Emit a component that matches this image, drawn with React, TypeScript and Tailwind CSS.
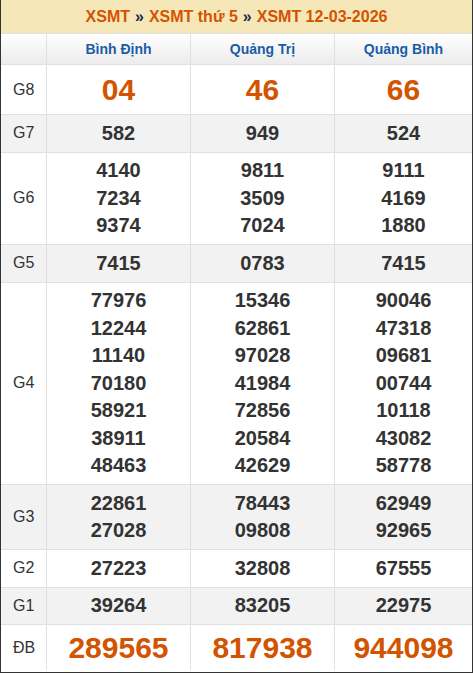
import React from "react";

const provinces = ["Bình Định", "Quảng Trị", "Quảng Bình"];

type Row = { label: string; values: string[][]; big?: boolean };

const rows: Row[] = [
    { label: "G8", values: [["04"], ["46"], ["66"]], big: true },
    { label: "G7", values: [["582"], ["949"], ["524"]] },
    {
        label: "G6",
        values: [
            ["4140", "7234", "9374"],
            ["9811", "3509", "7024"],
            ["9111", "4169", "1880"],
        ],
    },
    { label: "G5", values: [["7415"], ["0783"], ["7415"]] },
    {
        label: "G4",
        values: [
            ["77976", "12244", "11140", "70180", "58921", "38911", "48463"],
            ["15346", "62861", "97028", "41984", "72856", "20584", "42629"],
            ["90046", "47318", "09681", "00744", "10118", "43082", "58778"],
        ],
    },
    {
        label: "G3",
        values: [
            ["22861", "27028"],
            ["78443", "09808"],
            ["62949", "92965"],
        ],
    },
    { label: "G2", values: [["27223"], ["32808"], ["67555"]] },
    { label: "G1", values: [["39264"], ["83205"], ["22975"]] },
    { label: "ĐB", values: [["289565"], ["817938"], ["944098"]], big: true },
];

export default function App() {
    return (
        <div className="w-[473px] h-[673px] bg-white font-['Liberation_Sans'] border-b border-l border-r border-[#333]">
            <div className="h-[34px] flex items-center justify-center bg-[#f6e7b9] border-b border-[#e0e0e0] text-[16px] font-bold text-[#d35400]">
                <span>XSMT</span>
                <span className="mx-[5px] text-[#1a2a4a]">»</span>
                <span>XSMT thứ 5</span>
                <span className="mx-[5px] text-[#1a2a4a]">»</span>
                <span>XSMT 12-03-2026</span>
            </div>
            <div className="grid grid-cols-[46px_144px_144px_1fr]">
                <div className="h-[31px] border-r border-b border-[#e0e0e0] bg-gradient-to-b from-white to-[#ececec]" />
                {provinces.map((p, i) => (
                    <div
                        key={p}
                        className={
                            "h-[31px] flex items-center justify-center border-b border-[#e0e0e0] bg-gradient-to-b from-white to-[#ececec] text-[14px] font-bold text-[#1a5ca8] " +
                            (i < 2 ? "border-r" : "")
                        }
                    >
                        {p}
                    </div>
                ))}
                {rows.map((row, ri) => {
                    const bg = ri % 2 === 1 ? "bg-[#f2f2f2]" : "bg-white";
                    const last = ri === rows.length - 1;
                    const rowH = row.big ? (last ? "h-[45px]" : "h-[50px]") : "py-[4.5px]";
                    return (
                        <React.Fragment key={row.label}>
                            <div
                                className={`${bg} ${rowH} flex items-center pl-[12px] text-[16px] text-[#333] border-r border-[#e0e0e0] ${last ? "" : "border-b"}`}
                            >
                                {row.label}
                            </div>
                            {row.values.map((vals, ci) => (
                                <div
                                    key={ci}
                                    className={`${bg} ${rowH} flex flex-col items-center justify-center border-[#e0e0e0] ${ci < 2 ? "border-r" : ""} ${last ? "" : "border-b"}`}
                                >
                                    {vals.map((v) => (
                                        <div
                                            key={v}
                                            className={
                                                row.big
                                                    ? "text-[30px] leading-[40px] font-bold text-[#d35400]"
                                                    : "text-[20px] leading-[27.5px] font-bold text-[#333]"
                                            }
                                        >
                                            {v}
                                        </div>
                                    ))}
                                </div>
                            ))}
                        </React.Fragment>
                    );
                })}
            </div>
        </div>
    );
}
